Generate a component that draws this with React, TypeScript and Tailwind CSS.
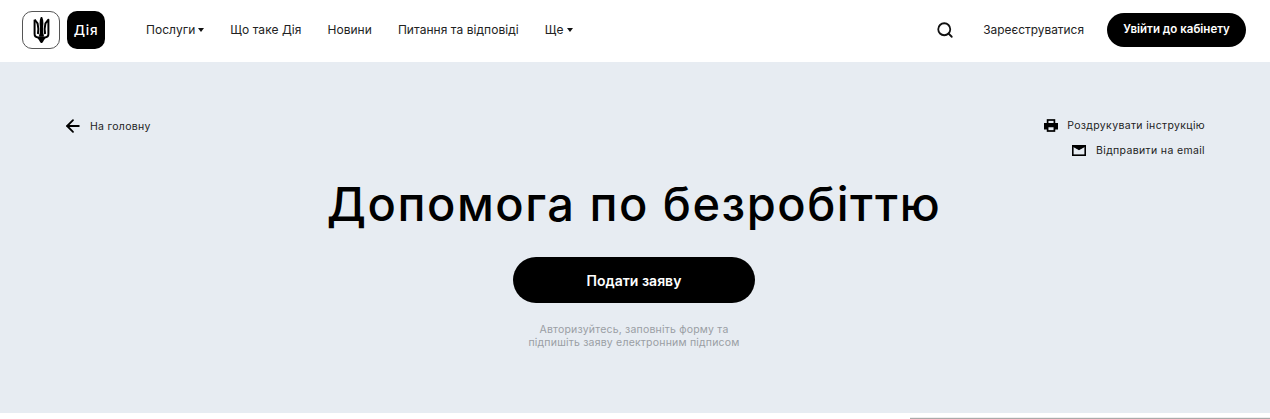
import { ArrowLeft, Search } from "lucide-react";

function Trident() {
  return (
    <svg width="17" height="26" viewBox="0 0 18 29" fill="none" stroke="#000" strokeWidth="2.2" strokeLinejoin="round">
      <path d="M9 1 C7.6 4 7.8 6 8.2 10 C8.6 14 8.3 18 7.4 21 H10.6 C9.7 18 9.4 14 9.8 10 C10.2 6 10.4 4 9 1Z" fill="#000" />
      <path d="M1.3 3 V19 C1.3 21.5 3 22.8 5.4 22.8 H12.6 C15 22.8 16.7 21.5 16.7 19 V3 L13.4 7 C12.4 11 12.2 15 13 19" />
      <path d="M1.3 3 L4.6 7 C5.6 11 5.8 15 5 19" />
      <path d="M5.4 22.8 C6.4 24 7.4 25 7.6 26 L9 28 L10.4 26 C10.6 25 11.6 24 12.6 22.8" fill="#000" />
    </svg>
  );
}

function PrinterIcon() {
  return (
    <svg width="14" height="13" viewBox="0 0 14 13" fill="none" className="block">
      <rect x="3.6" y="1" width="6.8" height="4" fill="#e7ecf2" stroke="#000" strokeWidth="1.7" />
      <path d="M3 9.5 H1 V5 H13 V9.5 H11" stroke="#000" strokeWidth="2" fill="#000" />
      <rect x="3.6" y="7.4" width="6.8" height="4.6" fill="#e7ecf2" stroke="#000" strokeWidth="1.7" />
    </svg>
  );
}

function MailIcon() {
  return (
    <svg width="14" height="11" viewBox="0 0 14 11" fill="none" className="block">
      <rect x="0.8" y="0.8" width="12.4" height="9.4" stroke="#000" strokeWidth="1.6" />
      <path d="M1.5 1.5 H12.5 L7 4.6 Z" fill="#000" stroke="#000" strokeWidth="1.2" strokeLinejoin="round" />
    </svg>
  );
}

function Caret() {
  return <span className="ml-[3px] inline-block h-0 w-0 border-x-[3.5px] border-t-[4px] border-x-transparent border-t-[#111]" />;
}

export default function App() {
  return (
    <div className="relative h-[419px] w-[1270px] overflow-hidden bg-white font-['Inter',sans-serif] text-black">
      <header className="flex h-[62px] items-center bg-white pr-[24px] pb-[2px] pl-[22px]">
        <div className="flex h-[38px] w-[38px] items-center justify-center rounded-[10px] border border-[#555] bg-white">
          <Trident />
        </div>
        <div className="ml-[7px] flex h-[38px] w-[38px] items-center justify-center rounded-[10px] bg-black text-[13.5px] font-medium tracking-[0.8px] text-white">
          Дія
        </div>
        <nav className="ml-[41px] flex items-center gap-[26px] text-[12px] tracking-[0.05px] text-[#222]">
          <span className="flex items-center">Послуги<Caret /></span>
          <span>Що таке Дія</span>
          <span>Новини</span>
          <span>Питання та відповіді</span>
          <span className="flex items-center">Ще<Caret /></span>
        </nav>
        <Search className="ml-auto h-[18px] w-[18px] text-[#111]" strokeWidth={2.4} />
        <span className="ml-[29px] text-[11.9px] text-[#222]">Зареєструватися</span>
        <button className="ml-[23px] flex h-[34px] w-[139px] items-center justify-center rounded-full bg-black text-[11.5px] font-semibold text-white">
          Увійти до кабінету
        </button>
      </header>
      <main className="relative flex h-[351px] flex-col items-center bg-[#e7ecf2] pr-[2px]">
        <div className="flex w-full items-start justify-between pt-[56px] pr-[63px] pl-[63px]">
          <div className="flex items-center gap-[7px] pt-[1px] text-[10.5px] tracking-[0.3px] text-[#222]">
            <ArrowLeft className="-mt-[4px] -mb-[2px] h-[20px] w-[20px] text-black" strokeWidth={2.2} />
            <span>На головну</span>
          </div>
          <div className="flex flex-col items-end gap-[10px] text-[10.5px] tracking-[0.35px] text-[#222]">
            <div className="flex h-[15px] items-center gap-[9px]">
              <PrinterIcon />
              <span>Роздрукувати інструкцію</span>
            </div>
            <div className="flex h-[15px] items-center gap-[10px]">
              <MailIcon />
              <span>Відправити на email</span>
            </div>
          </div>
        </div>
        <h1 className="mt-[18px] text-[47px] leading-[56px] font-medium tracking-[1.5px]">Допомога по безробіттю</h1>
        <button className="mt-[25px] flex h-[46px] w-[242px] items-center justify-center rounded-full bg-black text-[14px] font-semibold text-white">
          Подати заяву
        </button>
        <p className="mt-[20px] text-center text-[10.5px] leading-[13px] tracking-[0.2px] text-[#9a9ea4]">
          Авторизуйтесь, заповніть форму та<br />підпишіть заяву електронним підписом
        </p>
      </main>
      <div className="absolute right-0 bottom-0 h-[2px] w-[360px] border-t border-[#eeeeee] bg-[#aaaaaa]" />
    </div>
  );
}
